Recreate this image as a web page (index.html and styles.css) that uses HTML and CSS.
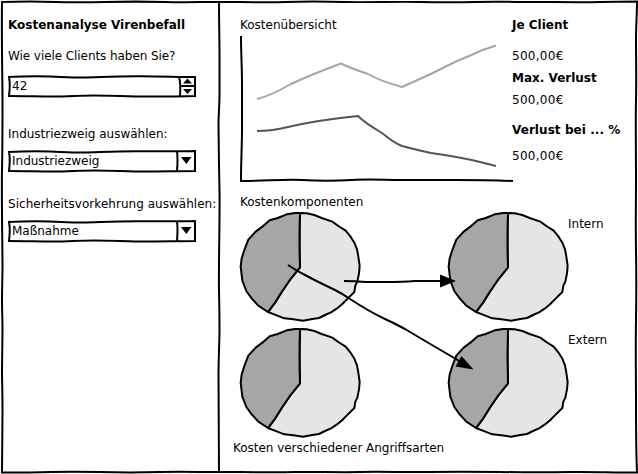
FILE: index.html
```html
<!DOCTYPE html>
<html lang="de">
<head>
<meta charset="utf-8">
<title>Kostenanalyse Virenbefall</title>
<link rel="stylesheet" href="styles.css">
</head>
<body>
<div class="app">
  <aside class="sidebar">
    <h1>Kostenanalyse Virenbefall</h1>
    <section class="field">
      <p class="label tight">Wie viele Clients haben Sie?</p>
      <div class="control">
        <svg class="sketch" viewBox="0 0 188 22">
          <path class="line" d="M0 2C20 1 28 1 42 1.500S62 2.500 75 2.500S105 1 132 1.200S170 2 187 2V21C170 21.500 155 21.500 138 21.500S103 20.500 86 20.500S62 21.500 45 21.500S20 21 0 21M1 2Q2.500 9 1 21M171 2Q173 9 172 21M172 11H187"/>
          <path d="M175 8.500h9L179.500 3.500zM175 14h9L179.500 19z"/>
        </svg>
        <span>42</span>
      </div>
    </section>
    <section class="field">
      <p class="label">Industriezweig auswählen:</p>
      <div class="control">
        <svg class="sketch" viewBox="0 0 188 22"><use href="#select-box"/></svg>
        <span>Industriezweig</span>
      </div>
    </section>
    <section class="field">
      <p class="label wide">Sicherheitsvorkehrung auswählen:</p>
      <div class="control">
        <svg class="sketch" viewBox="0 0 188 22">
          <g id="select-box">
            <path class="line" d="M0 2C20 1 28 1 42 1.500S62 2.500 75 2.500S105 1 132 1.200S170 1.500 187 1V21C170 21 155 21.500 138 21.500S103 20.500 86 20.500S62 21.500 45 21.500S20 21 0 21M1 2Q2.500 9 1 21M169 1Q170 9 169 21"/>
            <path d="M173 7h10.500l-5.200 7z"/>
          </g>
        </svg>
        <span>Maßnahme</span>
      </div>
    </section>
  </aside>
  <main class="main">
    <div class="overview">
      <section class="chart">
        <h2>Kostenübersicht</h2>
        <svg width="275" height="147" viewBox="239 35 275 147">
          <path class="line" d="M241 36C241 55 242 65 242 85S242 115 242 130S241 160 241 181C265 181 285 179 302 180S335 181 352 180S385 180 400 180S435 180 455 180S490 180 513 181"/>
          <path class="line light" d="M257 99Q270 96 291 84Q310 75 341 63.500Q350 68 368 74Q380 81 402 87Q430 75 457 61Q470 56 480 51L496 45.500"/>
          <path class="line dark" d="M257 131Q272 131 288 127Q318 120 358 116Q365 123 382 133Q394 143 402 146Q417 150 431 153Q460 157 480 162L496 166"/>
        </svg>
      </section>
      <dl class="stats">
        <dt>Je Client</dt><dd class="spaced">500,00€</dd>
        <dt>Max. Verlust</dt><dd>500,00€</dd>
        <dt class="last">Verlust bei ... %</dt><dd>500,00€</dd>
      </dl>
    </div>
    <h2 class="components">Kostenkomponenten</h2>
    <div class="pies">
      <svg class="pie" viewBox="42 66 366 330">
        <g id="pie">
          <path class="rim light-fill" d="M226 69L245 70L268 75L290 84L322 95L340 108L362 122L376 139L388 158L396 178L400 200L404 228L402 250L397 275L391 287L388 306L368 326L352 342L335 356L318 367L300 375L282 384L262 387L234 392L205 388L178 385L155 376L129 366Q152 338 170 306Q195 266 225 232Q222 150 225 69Z"/>
          <path class="rim dark-fill" d="M129 366L100 347L80 325L64 303L52 272L47 230L50 205L58 180L70 149L92 125L112 110L134 91L158 84L185 73L210 69L225 69Q222 150 225 232Q195 266 170 306Q152 338 129 366Z"/>
        </g>
      </svg>
      <svg class="pie" viewBox="42 66 366 330"><use href="#pie"/></svg>
      <p>Intern</p>
      <svg class="pie" viewBox="42 66 366 330"><use href="#pie"/></svg>
      <svg class="pie" viewBox="42 66 366 330"><use href="#pie"/></svg>
      <p>Extern</p>
    </div>
    <p class="caption">Kosten verschiedener Angriffsarten</p>
  </main>
  <svg class="overlay" viewBox="0 0 638 474">
    <path class="line" d="M2 2C20 1.500 40 1.500 55 2S85 2.500 105 2S145 1.500 165 2S200 2 219 2S270 2.500 285 2S325 1.500 345 2S400 1.500 420 2S455 2.500 475 2S515 2 535 2S580 2.500 600 2L637 1.500C637 15 636 25 636 40S636.500 80 636 100S636 150 636 180S635.500 220 636 250S636.500 290 636 320S636 380 636 400S636 450 637 472.500C610 472.500 590 471.500 570 472S530 472.500 500 472S450 471.500 430 472S385 471.500 360 472S315 471.500 295 472S240 472 219 472S180 471.500 160 472S120 472.500 100 472S65 471.500 50 472S20 472.500 2 472.500C2 455 2.500 430 2.500 410S2 380 2 370S2.500 340 2.500 330S2 310 2 300S2.500 275 2.500 265S1.500 190 2 170S2.500 115 2.500 100S1.500 40 2 2Z"/>
    <path class="line" d="M219 2C219 20 219.500 40 219.500 55S219.500 85 219.500 95S218.500 115 218.500 125S219 170 219.500 190S218.500 270 219 290S219.500 320 219.500 330S218.500 360 218.500 375S219 430 219 473"/>
    <path class="line" d="M344 281Q354 281 366 282H385Q403 282 415 281L441 281"/>
    <path class="line" d="M288 265Q297 271 305 275Q318 282 335 290Q343 294 350 299Q370 312 385 319Q394 323 405 329Q420 338 432 345L461 362"/>
    <path d="M440 274.500L456 281L440 287.500zM461.500 356L473.500 369.500L455.500 366.500z"/>
  </svg>
</div>
</body>
</html>
```
FILE: styles.css
```css
* { box-sizing: border-box; margin: 0; padding: 0; }

body {
  background: #fff;
  color: #000;
  font: 12px/14px "DejaVu Sans", sans-serif;
  overflow: hidden;
}

svg { display: block; }
h1, h2 { font-size: 12px; line-height: 14px; }
h2 { font-weight: normal; }

.app {
  position: relative;
  display: grid;
  grid-template-columns: 219px 1fr;
  width: 638px;
  height: 474px;
}

.sidebar { padding: 18px 0 0 8px; white-space: nowrap; }
.sidebar h1 { margin-bottom: 17px; }
.field { margin-bottom: 25px; }
.field:nth-of-type(1) { margin-bottom: 30px; }
.label { margin-bottom: 9px; }
.label.tight { letter-spacing: -0.07px; }
.label.wide { letter-spacing: 0.03px; }
.field:nth-of-type(1) .label { margin-bottom: 12px; }

.control {
  position: relative;
  width: 188px;
  height: 22px;
  padding: 4px 0 0 4px;
}
.control span { position: relative; }
.sketch { position: absolute; inset: 0; width: 188px; height: 22px; overflow: visible; }

.line { fill: none; stroke: #000; stroke-width: 2; }
.light { stroke: #a6a6a6; }
.dark { stroke: #555; }

.main { padding: 18px 0 0 21px; }
.overview { display: flex; height: 177px; }
.chart { width: 272px; }
.chart svg { margin: 3px 0 0 -1px; }

.stats { white-space: nowrap; }
.stats dt { font-weight: bold; margin-bottom: 8px; }
.stats dt:first-child { margin-bottom: 17px; }
.stats dt.last { margin: 16px 0 12px; letter-spacing: 0.06px; }
.stats dd { letter-spacing: 0.28px; }
.stats dd.spaced { margin-bottom: 8px; }

.components { height: 17px; }
.pies {
  display: grid;
  grid-template-columns: 208px 121px 1fr;
  grid-auto-rows: 116px;
  margin-left: -1px;
}
.pie { width: 122px; height: 110px; }
.pies p { padding-top: 5px; }
.rim { stroke: #000; stroke-width: 6; stroke-linejoin: round; }
.light-fill { fill: #e5e5e5; }
.dark-fill { fill: #a6a6a6; }
.caption { margin: -3px 0 0 -7px; letter-spacing: -0.03px; }

.overlay { position: absolute; inset: 0; width: 638px; height: 474px; pointer-events: none; }
```
